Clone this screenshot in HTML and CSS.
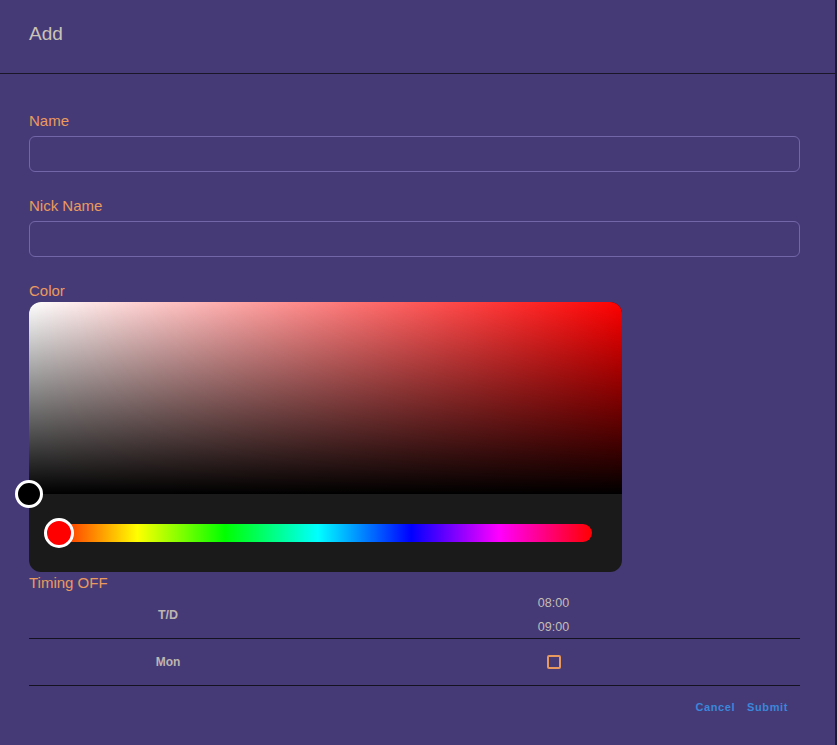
FILE: index.html
```html
<!DOCTYPE html>
<html>
<head>
<meta charset="utf-8">
<link rel="stylesheet" href="styles.css">
</head>
<body>
<div class="dialog">
  <header class="head"><h1 class="title">Add</h1></header>
  <main class="content">
    <label class="label first">Name</label>
    <div class="input"></div>
    <label class="label">Nick Name</label>
    <div class="input"></div>
    <label class="label color-label">Color</label>
    <div class="picker">
      <div class="sat">
        <span class="sat-thumb"></span>
      </div>
      <div class="picker-body">
        <div class="hue">
          <span class="hue-thumb"></span>
        </div>
      </div>
    </div>
    <label class="label timing">Timing OFF</label>
    <div class="table">
      <div class="row head-row">
        <div class="cell td">T/D</div>
        <div class="cell times"><span>08:00</span><span>09:00</span></div>
      </div>
      <div class="row">
        <div class="cell day">Mon</div>
        <div class="cell"><span class="check"></span></div>
      </div>
    </div>
    <div class="actions">
      <button class="btn">Cancel</button>
      <button class="btn">Submit</button>
    </div>
  </main>
</div>
</body>
</html>
```
FILE: styles.css
```css
html, body {
  margin: 0;
  padding: 0;
  background: #463a76;
  height: 100%;
}
body {
  font-family: "Liberation Sans", Arial, sans-serif;
  overflow: hidden;
}
.dialog {
  width: 835px;
  height: 745px;
  border-right: 2px solid #1d1930;
  background: #463a76;
}
.head {
  border-bottom: 1px solid #1a1628;
  display: flex;
  align-items: center;
  padding-left: 29px;
  box-sizing: border-box;
  height: 74px;
}
.title {
  margin: -6px 0 0 0;
  font-size: 19px;
  font-weight: normal;
  color: #cbc3b6;
}
.content {
  padding: 0 35px 0 29px;
  display: flex;
  flex-direction: column;
}
.label {
  display: block;
  font-size: 15px;
  line-height: 17px;
  color: #eb9a5d;
  margin-top: 25px;
}
.label.first { margin-top: 38px; }
.input {
  margin-top: 7px;
  height: 36px;
  box-sizing: border-box;
  border: 1px solid #7366a8;
  border-radius: 6px;
}
.picker {
  margin-top: 3px;
  width: 593px;
  height: 270px;
  border-radius: 12px;
  background: #1a1a1a;
  position: relative;
}
.sat {
  height: 192px;
  border-radius: 12px 12px 0 0;
  background:
    linear-gradient(to top, #000, rgba(0,0,0,0)),
    linear-gradient(to right, #fff, rgba(255,255,255,0)),
    #ff0000;
  position: relative;
}
.sat-thumb {
  position: absolute;
  left: -14px;
  bottom: -14px;
  width: 28px;
  height: 28px;
  box-sizing: border-box;
  border: 3px solid #fff;
  border-radius: 50%;
  background: #000;
}
.picker-body {
  padding: 30px 30px 0 15px;
}
.hue {
  height: 18px;
  border-radius: 9px;
  position: relative;
  background: linear-gradient(to right, #f00 0%, #ff0 17%, #0f0 33%, #0ff 50%, #00f 67%, #f0f 83%, #f00 100%);
}
.hue-thumb {
  position: absolute;
  left: 0;
  top: -6px;
  width: 30px;
  height: 30px;
  box-sizing: border-box;
  border: 3px solid #fff;
  border-radius: 50%;
  background: #f00;
}
.label.timing { margin-top: 2px; }
.row {
  display: grid;
  grid-template-columns: 278px 1fr;
  height: 47px;
  border-bottom: 1px solid #141220;
  box-sizing: border-box;
  align-items: center;
}
.head-row { height: 48px; }
.cell {
  display: flex;
  justify-content: center;
  align-items: center;
  font-size: 12px;
  color: #c5bdb5;
}
.td { font-weight: bold; font-size: 12.5px; color: #bdb5b0; padding-top: 1px; }
.day { font-weight: bold; font-size: 12px; color: #bdb5b0; }
.times {
  flex-direction: column;
  gap: 10px;
  font-size: 12.5px;
  line-height: 14px;
  padding-top: 1px;
}
.check {
  display: block;
  width: 14px;
  height: 14px;
  box-sizing: border-box;
  border: 2px solid #e6985f;
  border-radius: 2px;
}
.actions {
  display: flex;
  justify-content: flex-end;
  padding-top: 11px;
  padding-right: 6px;
}
.btn {
  background: none;
  border: none;
  font-family: "Liberation Sans", Arial, sans-serif;
  font-size: 11px;
  font-weight: bold;
  letter-spacing: 0.6px;
  color: #3a87db;
  padding: 4px 6px;
  cursor: pointer;
}
```
